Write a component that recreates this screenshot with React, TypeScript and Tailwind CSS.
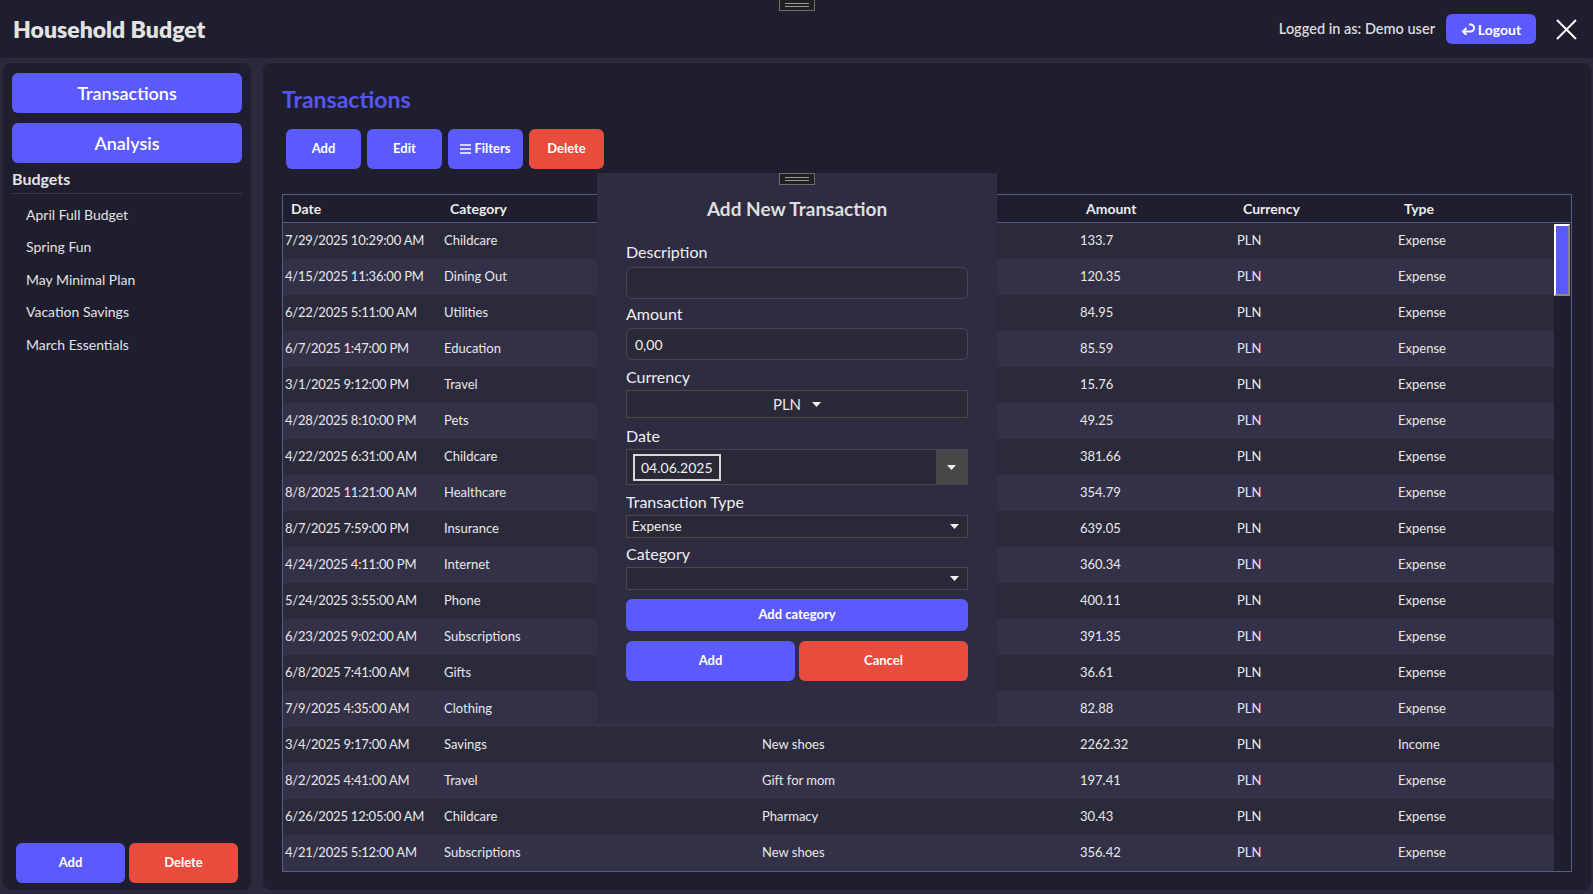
import React from "react";

type Row = { date: string; cat: string; desc: string; amt: string; type: string };

const rows: Row[] = [
  { date: "7/29/2025 10:29:00 AM", cat: "Childcare", desc: "School supplies", amt: "133.7", type: "Expense" },
  { date: "4/15/2025 11:36:00 PM", cat: "Dining Out", desc: "Dinner with friends", amt: "120.35", type: "Expense" },
  { date: "6/22/2025 5:11:00 AM", cat: "Utilities", desc: "Electricity bill", amt: "84.95", type: "Expense" },
  { date: "6/7/2025 1:47:00 PM", cat: "Education", desc: "Online course", amt: "85.59", type: "Expense" },
  { date: "3/1/2025 9:12:00 PM", cat: "Travel", desc: "Train ticket", amt: "15.76", type: "Expense" },
  { date: "4/28/2025 8:10:00 PM", cat: "Pets", desc: "Dog food", amt: "49.25", type: "Expense" },
  { date: "4/22/2025 6:31:00 AM", cat: "Childcare", desc: "Babysitter", amt: "381.66", type: "Expense" },
  { date: "8/8/2025 11:21:00 AM", cat: "Healthcare", desc: "Dentist", amt: "354.79", type: "Expense" },
  { date: "8/7/2025 7:59:00 PM", cat: "Insurance", desc: "Car insurance", amt: "639.05", type: "Expense" },
  { date: "4/24/2025 4:11:00 PM", cat: "Internet", desc: "Monthly plan", amt: "360.34", type: "Expense" },
  { date: "5/24/2025 3:55:00 AM", cat: "Phone", desc: "Phone bill", amt: "400.11", type: "Expense" },
  { date: "6/23/2025 9:02:00 AM", cat: "Subscriptions", desc: "Streaming", amt: "391.35", type: "Expense" },
  { date: "6/8/2025 7:41:00 AM", cat: "Gifts", desc: "Birthday gift", amt: "36.61", type: "Expense" },
  { date: "7/9/2025 4:35:00 AM", cat: "Clothing", desc: "Jacket", amt: "82.88", type: "Expense" },
  { date: "3/4/2025 9:17:00 AM", cat: "Savings", desc: "New shoes", amt: "2262.32", type: "Income" },
  { date: "8/2/2025 4:41:00 AM", cat: "Travel", desc: "Gift for mom", amt: "197.41", type: "Expense" },
  { date: "6/26/2025 12:05:00 AM", cat: "Childcare", desc: "Pharmacy", amt: "30.43", type: "Expense" },
  { date: "4/21/2025 5:12:00 AM", cat: "Subscriptions", desc: "New shoes", amt: "356.42", type: "Expense" },
];

const budgets = ["April Full Budget", "Spring Fun", "May Minimal Plan", "Vacation Savings", "March Essentials"];

function Caret() {
  return (
    <svg width="9" height="5" viewBox="0 0 9 5">
      <path d="M0 0 L9 0 L4.5 5 Z" fill="#f0f0f0" />
    </svg>
  );
}

function Handle() {
  return (
    <div className="w-[36px] h-[12px] bg-[#202020] border border-[#6e6e6e] flex flex-col items-center justify-center gap-[2px]">
      <div className="w-[24px] h-[1px] bg-[#9a9a9a]" />
      <div className="w-[24px] h-[1px] bg-[#9a9a9a]" />
    </div>
  );
}

export default function App() {
  return (
    <div className="w-[1593px] h-[894px] bg-[#2b2a3c] flex flex-col overflow-hidden relative [font-family:Lato,'Noto_Sans',sans-serif] text-[#e8e8e8]">
      {/* Header */}
      <header className="h-[58px] shrink-0 bg-[#1f1e2e] flex items-center pl-[13px] pr-[16px] relative">
        <h1 className="text-[23px] font-extrabold text-[#e2e2e2] leading-none">Household Budget</h1>
        <div className="absolute left-[779px] top-[-1px]">
          <Handle />
        </div>
        <div className="ml-auto flex items-center">
          <span className="text-[14.5px] font-semibold text-[#dadada]">Logged in as: Demo user</span>
          <button className="ml-[11px] h-[30px] w-[90px] rounded-[6px] bg-[#5a5aff] text-white text-[14px] font-bold flex items-center justify-center gap-[3px]">
            <svg width="14" height="12" viewBox="0 0 14 12">
              <path d="M8 1.5 H9.5 A3.5 3.5 0 0 1 9.5 8.5 H3" fill="none" stroke="white" strokeWidth="2" />
              <path d="M5.5 5 L2 8.5 L5.5 12" fill="none" stroke="white" strokeWidth="2" />
            </svg>
            Logout
          </button>
          <svg className="ml-[20px]" width="21" height="21" viewBox="0 0 21 21">
            <path d="M1 1 L20 20 M20 1 L1 20" stroke="white" strokeWidth="2" />
          </svg>
        </div>
      </header>

      {/* Body */}
      <div className="flex-1 flex gap-[12px] pl-[3px] pr-[2px] pt-[5px] pb-[4px] min-h-0">
        {/* Sidebar */}
        <aside className="w-[248px] shrink-0 bg-[#1f1e2e] rounded-[8px] flex flex-col px-[9px] pt-[10px] pb-[7px]">
          <button className="h-[40px] w-full rounded-[6px] bg-[#5a5aff] text-white text-[18px] font-semibold">Transactions</button>
          <button className="mt-[10px] h-[40px] w-full rounded-[6px] bg-[#5a5aff] text-white text-[18px] font-semibold">Analysis</button>
          <div className="mt-[6px] pb-[4px] border-b border-[#3a3950] text-[16px] font-bold text-[#e4e4e4] leading-[20px]">Budgets</div>
          <div className="pt-[4px] flex flex-col">
            {budgets.map((b) => (
              <div key={b} className="h-[32.5px] flex items-center pl-[14px] text-[14px] text-[#e2e2e2]">
                {b}
              </div>
            ))}
          </div>
          <div className="mt-auto flex gap-[4px] px-[4px]">
            <button className="h-[40px] flex-1 rounded-[6px] bg-[#5a5aff] text-white text-[13px] font-bold">Add</button>
            <button className="h-[40px] flex-1 rounded-[6px] bg-[#e74c3c] text-white text-[13px] font-bold">Delete</button>
          </div>
        </aside>

        {/* Main */}
        <main className="flex-1 bg-[#1f1e2e] rounded-[8px] flex flex-col px-[19px] pt-[22px] pb-[18px] min-w-0">
          <h2 className="text-[23px] font-bold text-[#5656f2] leading-[28px]">Transactions</h2>
          <div className="mt-[16px] ml-[4px] flex gap-[6px]">
            <button className="h-[40px] w-[75px] rounded-[6px] bg-[#5a5aff] text-white text-[13px] font-bold">Add</button>
            <button className="h-[40px] w-[75px] rounded-[6px] bg-[#5a5aff] text-white text-[13px] font-bold">Edit</button>
            <button className="h-[40px] w-[75px] rounded-[6px] bg-[#5a5aff] text-white text-[13px] font-bold flex items-center justify-center gap-[3px]">
              <svg width="11" height="10" viewBox="0 0 11 10">
                <path d="M0 1 H11 M0 5 H11 M0 9 H11" stroke="white" strokeWidth="1.5" />
              </svg>
              Filters
            </button>
            <button className="h-[40px] w-[75px] rounded-[6px] bg-[#e74c3c] text-white text-[13px] font-bold">Delete</button>
          </div>

          {/* Table */}
          <div className="mt-[25px] flex-1 border border-[#5b5a84] flex flex-col min-h-0 overflow-hidden">
            <div className="h-[28px] shrink-0 border-b border-[#5b5a84] flex items-center pl-[8px] text-[14px] font-bold text-[#ececec]">
              <div className="w-[159px]">Date</div>
              <div className="w-[318px]">Category</div>
              <div className="w-[318px]">Description</div>
              <div className="w-[157px]">Amount</div>
              <div className="w-[161px]">Currency</div>
              <div className="w-[156px]">Type</div>
            </div>
            <div className="flex-1 flex min-h-0">
              <div className="flex-1 flex flex-col">
                {rows.map((r, i) => (
                  <div
                    key={i}
                    className={
                      "h-[36px] shrink-0 flex items-center pl-[2px] text-[13px] text-[#e8e8e8] " +
                      (i % 2 === 0 ? "bg-[#2b2a3b]" : "bg-[#333147]")
                    }
                  >
                    <div className="w-[159px] whitespace-nowrap tracking-[-0.2px]">{r.date}</div>
                    <div className="w-[318px]">{r.cat}</div>
                    <div className="w-[318px]">{r.desc}</div>
                    <div className="w-[157px]">{r.amt}</div>
                    <div className="w-[161px]">PLN</div>
                    <div className="w-[156px]">{r.type}</div>
                  </div>
                ))}
              </div>
              <div className="w-[17px] shrink-0 bg-[#1f1e2e] pt-[1px]">
                <div className="w-[16px] h-[72px] bg-[#5a5aff] border-l-2 border-t-2 border-l-white border-t-white border-r-2 border-b-2 border-r-[#8a8a8a] border-b-[#8a8a8a]" />
              </div>
            </div>
          </div>
        </main>
      </div>

      {/* Modal */}
      <div className="absolute left-[597px] top-[173px] w-[400px] h-[550px] bg-[#2e2c40] flex flex-col px-[29px]">
        <div className="self-center">
          <Handle />
        </div>
        <div className="mt-[12px] h-[24px] leading-[24px] text-center text-[19px] font-bold text-[#dedede]">Add New Transaction</div>

        <div className="mt-[20px] h-[21px] leading-[21px] text-[16px] text-[#f0f0f0]">Description</div>
        <div className="mt-[5px] h-[32px] rounded-[6px] border border-[#47465a] bg-[#2a2937]" />

        <div className="mt-[4px] h-[21px] leading-[21px] text-[16px] text-[#f0f0f0]">Amount</div>
        <div className="mt-[4px] h-[32px] rounded-[6px] border border-[#47465a] bg-[#2a2937] flex items-center pl-[8px] text-[14px] text-[#f0f0f0]">0,00</div>

        <div className="mt-[6px] h-[21px] leading-[21px] text-[16px] text-[#f0f0f0]">Currency</div>
        <div className="mt-[3px] h-[28px] border border-[#4a4a4a] bg-[#2a2937] flex items-center justify-center gap-[11px] text-[15px] text-[#e8e8e8]">
          <span>PLN</span>
          <Caret />
        </div>

        <div className="mt-[7px] h-[21px] leading-[21px] text-[16px] text-[#f0f0f0]">Date</div>
        <div className="mt-[3px] h-[36px] border border-[#4a4a4a] bg-[#2a2937] flex items-center">
          <div className="ml-[6px] h-[27px] px-[6px] border-2 border-[#d8d8d8] flex items-center text-[14px] text-[#f0f0f0]">04.06.2025</div>
          <div className="ml-auto h-full w-[31px] bg-[#474747] flex items-center justify-center">
            <Caret />
          </div>
        </div>

        <div className="mt-[6px] h-[21px] leading-[21px] text-[16px] text-[#f0f0f0]">Transaction Type</div>
        <div className="mt-[3px] h-[23px] border border-[#4a4a4a] bg-[#2a2937] flex items-center pl-[5px] pr-[8px] text-[13.5px] text-[#f0f0f0]">
          <span>Expense</span>
          <span className="ml-auto flex"><Caret /></span>
        </div>

        <div className="mt-[5px] h-[21px] leading-[21px] text-[16px] text-[#f0f0f0]">Category</div>
        <div className="mt-[3px] h-[23px] border border-[#4a4a4a] bg-[#2a2937] flex items-center pr-[8px]">
          <span className="ml-auto flex"><Caret /></span>
        </div>

        <button className="mt-[9px] h-[32px] w-full rounded-[6px] bg-[#5a5aff] text-white text-[13px] font-bold">Add category</button>
        <div className="mt-[10px] flex gap-[4px]">
          <button className="h-[40px] flex-1 rounded-[6px] bg-[#5a5aff] text-white text-[13px] font-bold">Add</button>
          <button className="h-[40px] flex-1 rounded-[6px] bg-[#e74c3c] text-white text-[13px] font-bold">Cancel</button>
        </div>
      </div>
    </div>
  );
}
